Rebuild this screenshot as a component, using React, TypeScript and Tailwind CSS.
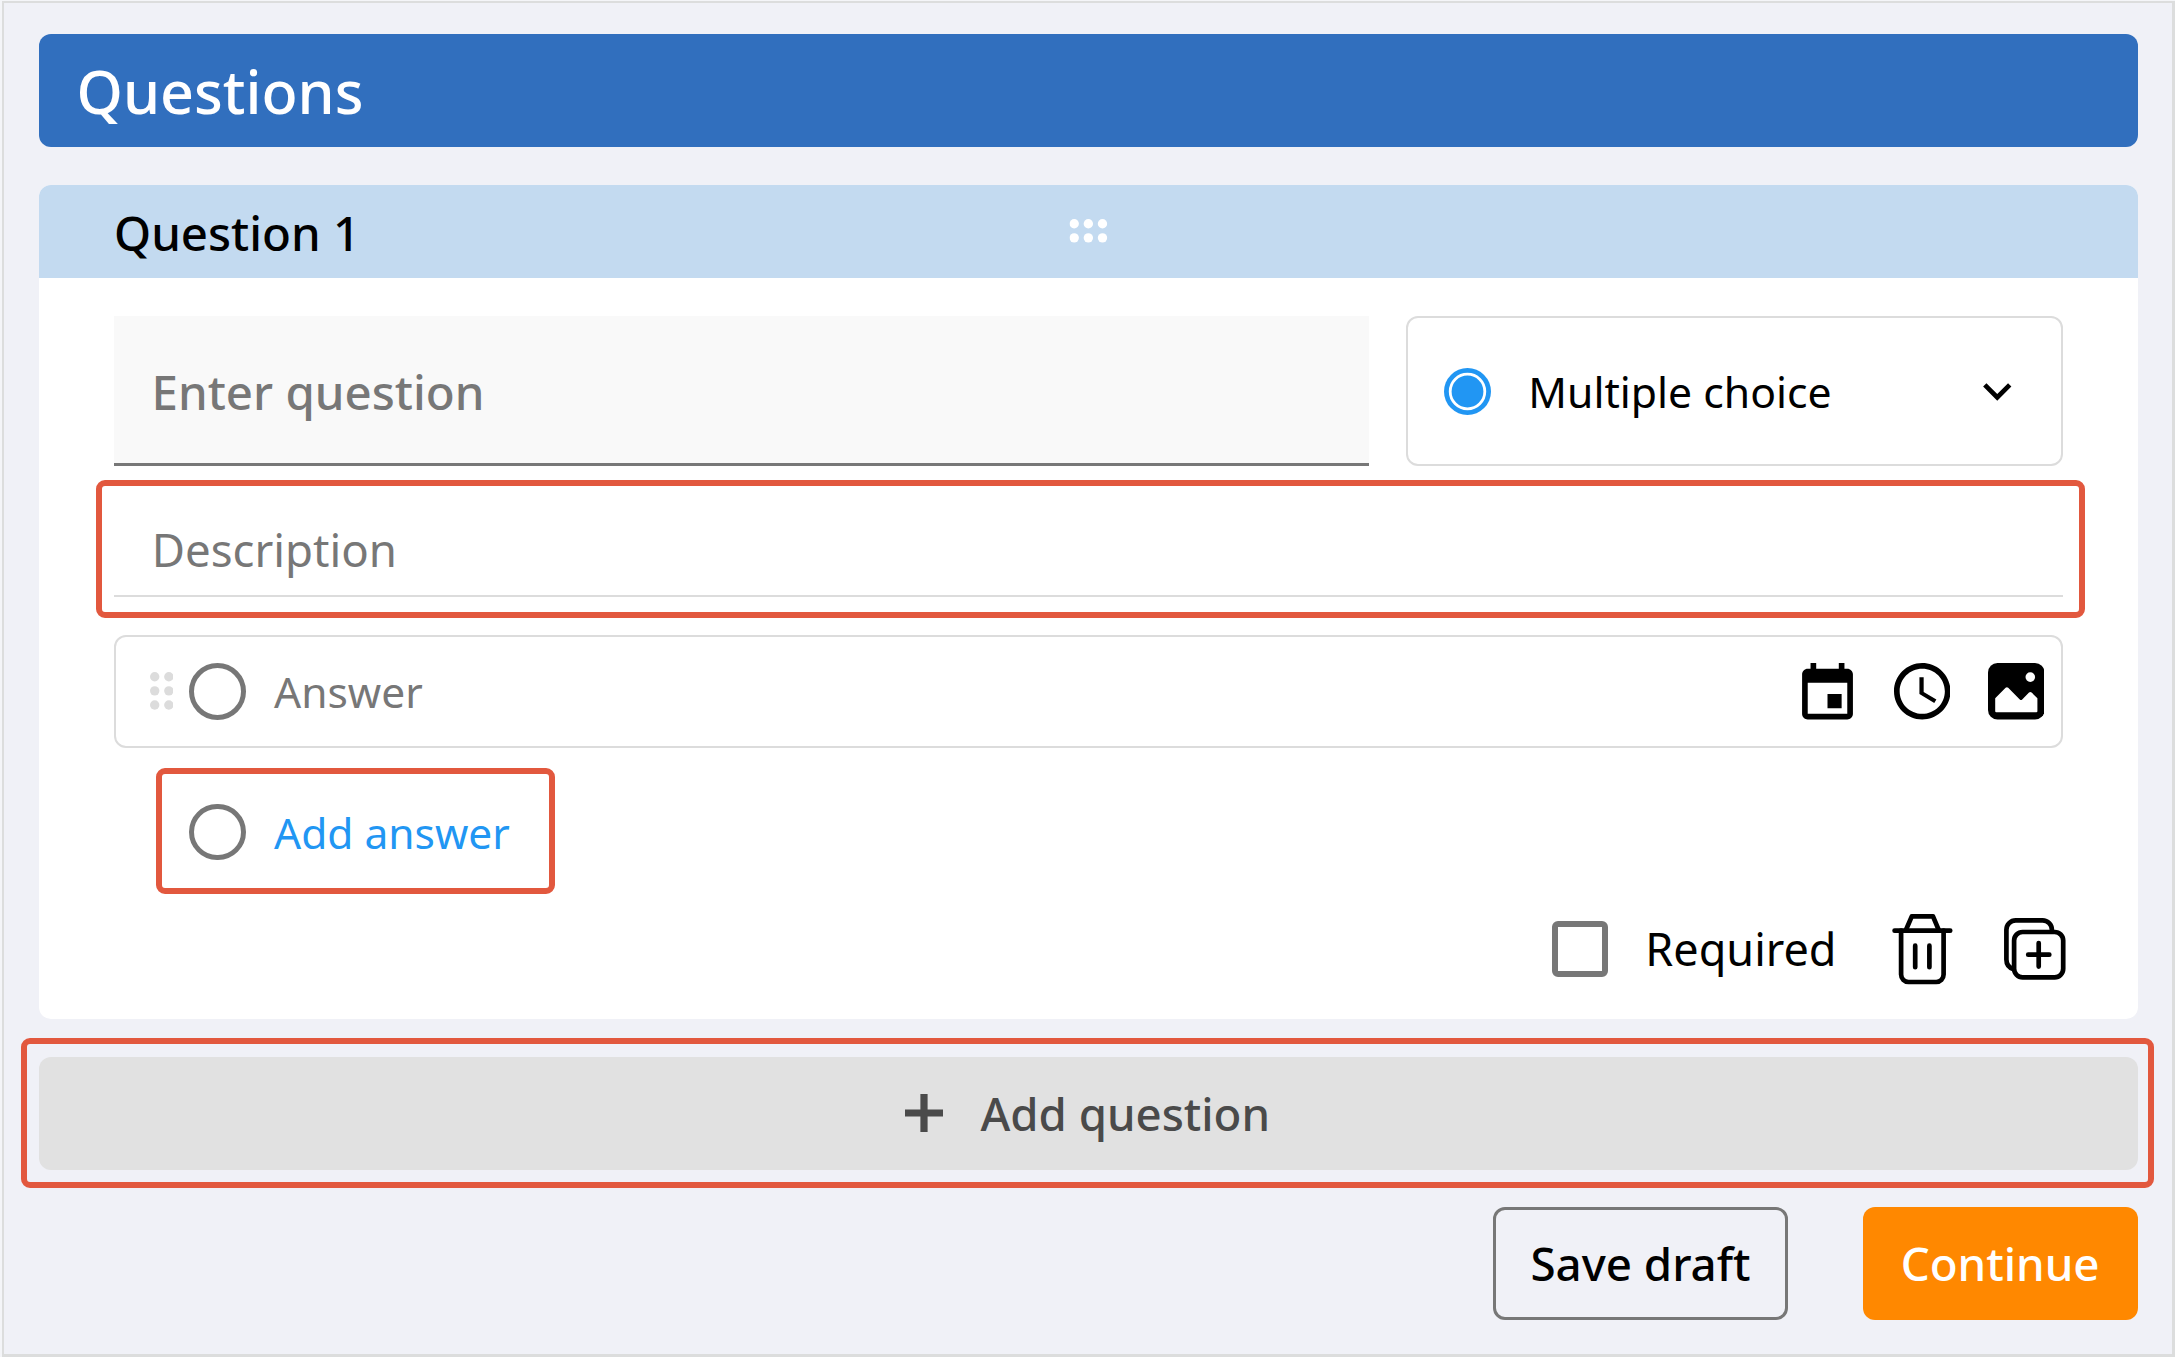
import type { ReactNode } from "react";

function Highlight({ className }: { className: string }) {
  return (
    <div
      aria-hidden="true"
      className={`pointer-events-none absolute rounded-[9px] border-[6px] border-[#e2583e] ${className}`}
    />
  );
}

function DragDots({ cols, rows, className }: { cols: number; rows: number; className: string }) {
  const step = 14.15;
  const r = 4.7;
  const w = (cols - 1) * step + r * 2;
  const h = (rows - 1) * step + r * 2;
  return (
    <svg className={className} width={w} height={h} viewBox={`0 0 ${w} ${h}`} fill="currentColor">
      {Array.from({ length: cols * rows }, (_, i) => (
        <circle key={i} cx={r + (i % cols) * step} cy={r + Math.floor(i / cols) * step} r={r} />
      ))}
    </svg>
  );
}

function EmptyRadio() {
  return <span className="size-[56.5px] shrink-0 rounded-full border-[5px] border-[#777]" />;
}

function CalendarIcon() {
  return (
    <svg width="51" height="56.5" viewBox="3 1 18 20" fill="currentColor">
      <path d="M17 12h-5v5h5v-5zM16 1v2H8V1H6v2H5c-1.11 0-1.99.9-1.99 2L3 19c0 1.1.89 2 2 2h14c1.1 0 2-.9 2-2V5c0-1.1-.9-2-2-2h-1V1h-2zm3 18H5V8h14v11z" />
    </svg>
  );
}

function ClockIcon() {
  return (
    <svg width="56.5" height="56.5" viewBox="2 2 20 20" fill="currentColor">
      <path d="M11.99 2C6.47 2 2 6.48 2 12s4.47 10 9.99 10C17.52 22 22 17.52 22 12S17.52 2 11.99 2zM12 20c-4.42 0-8-3.58-8-8s3.58-8 8-8 8 3.58 8 8-3.58 8-8 8z" />
      <path d="M12.5 7H11v6l5.25 3.15.75-1.23-4.5-2.67z" />
    </svg>
  );
}

function ImageIcon() {
  return (
    <svg width="56.5" height="56.5" viewBox="0 0 56.5 56.5">
      <rect width="56.5" height="56.5" rx="9.5" fill="currentColor" />
      <circle cx="42.3" cy="14.1" r="4.8" fill="#fff" />
      <path
        d="M7.2 35.2 17.6 24.8Q18.9 23.6 20.2 24.8L31.8 36.4Q33 37.5 34.2 36.4L41 29.5Q42.3 28.3 43.6 29.5L49.4 35.2V48.2Q49.4 49.3 48.3 49.3H8.3Q7.2 49.3 7.2 48.2Z"
        fill="#fff"
      />
    </svg>
  );
}

function TrashIcon() {
  return (
    <svg width="61" height="71" viewBox="0 0 61 71" fill="none" stroke="currentColor" strokeWidth="4.7" strokeLinecap="round" strokeLinejoin="round">
      <path d="M2.6 16.7H58.2" />
      <path d="M13.8 16.2 19.8 2.4H41L46.8 16.2" />
      <path d="M9.1 16.7V60.6a7.4 7.4 0 0 0 7.4 7.4H44.2a7.4 7.4 0 0 0 7.4-7.4V16.7" />
      <path d="M23.2 31.7V53.2M37.4 31.7V53.2" />
    </svg>
  );
}

function DuplicateIcon() {
  return (
    <svg width="62" height="62" viewBox="0 0 62 62" fill="none" stroke="currentColor" strokeWidth="4.7" strokeLinecap="round">
      <path strokeLinecap="butt" d="M9.6 51.2C5 49.8 2.4 46 2.4 41.5V11.8a9.4 9.4 0 0 1 9.4-9.4H38.6a9.4 9.4 0 0 1 9.3 9.4V14" />
      <rect x="10.1" y="14" width="49.1" height="45.3" rx="8.5" />
      <path d="M34.7 25V48.6M24.2 36.7H45.3" />
    </svg>
  );
}

function AnswerRow({ children, className }: { children: ReactNode; className?: string }) {
  return <div className={`flex items-center ${className ?? ""}`}>{children}</div>;
}

export default function App() {
  return (
    <div className="h-[1357px] w-[2175px] overflow-hidden bg-[#f4f5f8] pt-px pl-[2px] font-['Noto_Sans',sans-serif] text-black whitespace-nowrap">
      <div className="h-[1356px] border-t-2 border-r-[3px] border-b-[3px] border-l-2 border-[#dcdddd] bg-[#f0f1f7] pt-[31px] pr-[34px] pl-[35px]">
        <header className="flex h-[113px] items-center rounded-xl bg-[#316fbe] pt-[2px] pl-[37.5px] text-[59.2px] leading-none font-medium text-white">
          Questions
        </header>

        <section className="mt-[38px] h-[834px] rounded-xl bg-white">
          <div className="grid h-[93px] grid-cols-[1fr_auto_1fr] items-center rounded-t-xl bg-[#c3daf0] pl-[75px]">
            <h2 className="pt-[2px] text-[47.4px] leading-none font-medium">Question 1</h2>
            <DragDots cols={3} rows={2} className="-mt-px -translate-x-[37.5px] text-white" />
            <span />
          </div>

          <div className="pt-[38px] pr-[75.5px] pl-[75px]">
            <div className="flex h-[150px] gap-[37px]">
              <div className="flex w-[1255px] items-center border-b-[3px] border-[#777] bg-[#f9f9f9] pt-[5px] pl-[37.6px] text-[47.4px] leading-none font-medium text-[#777]">
                Enter question
              </div>
              <div className="flex flex-1 items-center rounded-xl border-2 border-[#dcdcdc] pr-[35px] pl-[36px]">
                <svg width="47" height="47" viewBox="0 0 47 47">
                  <circle cx="23.5" cy="23.5" r="23.5" fill="#2196f3" />
                  <circle cx="23.5" cy="23.5" r="17.3" fill="none" stroke="#fff" strokeWidth="2.8" />
                </svg>
                <span className="ml-[37.3px] pt-[2px] text-[42.7px] leading-none">Multiple choice</span>
                <svg className="ml-auto" width="56.5" height="56.5" viewBox="0 0 24 24">
                  <path d="M16.59 8.59 12 13.17 7.41 8.59 6 10l6 6 6-6z" />
                </svg>
              </div>
            </div>

            <div className="relative mt-[36px] flex h-[95px] items-center border-b-2 border-[#dcdcdc] pt-[3px] pl-[37.7px] text-[45.6px] leading-none text-[#777]">
              Description
              <Highlight className="-top-[22px] -left-[18px] h-[138px] w-[1989px]" />
            </div>

            <AnswerRow className="mt-[38px] h-[112.5px] rounded-xl border-2 border-[#dcdcdc] pr-[16.5px] pl-[33.5px]">
              <DragDots cols={2} rows={3} className="text-[#dcdcdc]" />
              <span className="ml-[16px] flex items-center gap-[28.5px] text-[42.5px] leading-none text-[#777]">
                <EmptyRadio />
                <span className="pt-[2px]">Answer</span>
              </span>
              <span className="ml-auto flex items-center">
                <CalendarIcon />
                <span className="ml-[40.8px]">
                  <ClockIcon />
                </span>
                <span className="ml-[37.3px]">
                  <ImageIcon />
                </span>
              </span>
            </AnswerRow>

            <AnswerRow className="relative mt-[20.5px] ml-[42px] h-[126px] w-[399px] gap-[28.5px] pt-[1.5px] pl-[33px] text-[42.5px] leading-none text-[#2196f3]">
              <EmptyRadio />
              <span className="pt-[2px]">Add answer</span>
              <Highlight className="inset-0" />
            </AnswerRow>

            <div className="mt-[20px] -mr-[3px] flex h-[71px] items-center justify-end">
              <span className="-mt-px size-[56px] rounded-[6px] border-[6px] border-[#777]" />
              <span className="-mt-[3px] mr-[55px] ml-[37px] text-[45px] leading-none">Required</span>
              <TrashIcon />
              <span className="-mt-px ml-[51px]">
                <DuplicateIcon />
              </span>
            </div>
          </div>
        </section>

        <div className="relative mt-[38px] flex h-[112.5px] items-center justify-center rounded-xl bg-[#e1e1e1] pr-[2px] text-[45.6px] leading-none font-medium text-[#4a4a4a]">
          <svg width="38" height="38" viewBox="0 0 38 38" fill="currentColor">
            <path d="M15.4 0h7.2v15.4H38v7.2H22.6V38h-7.2V22.6H0v-7.2h15.4z" />
          </svg>
          <span className="ml-[37.5px] pt-[2px]">Add question</span>
          <Highlight className="-top-[19px] -left-[18px] h-[150px] w-[2133px]" />
        </div>

        <footer className="mt-[37.5px] flex h-[112.5px] justify-end gap-[75px] text-[45.7px] leading-none font-medium">
          <button className="w-[295.5px] rounded-xl border-[3px] border-[#777] pt-[2px]">Save draft</button>
          <button className="w-[274.8px] rounded-xl bg-[#ff8800] pt-[2px] pr-px text-white">Continue</button>
        </footer>
      </div>
    </div>
  );
}
